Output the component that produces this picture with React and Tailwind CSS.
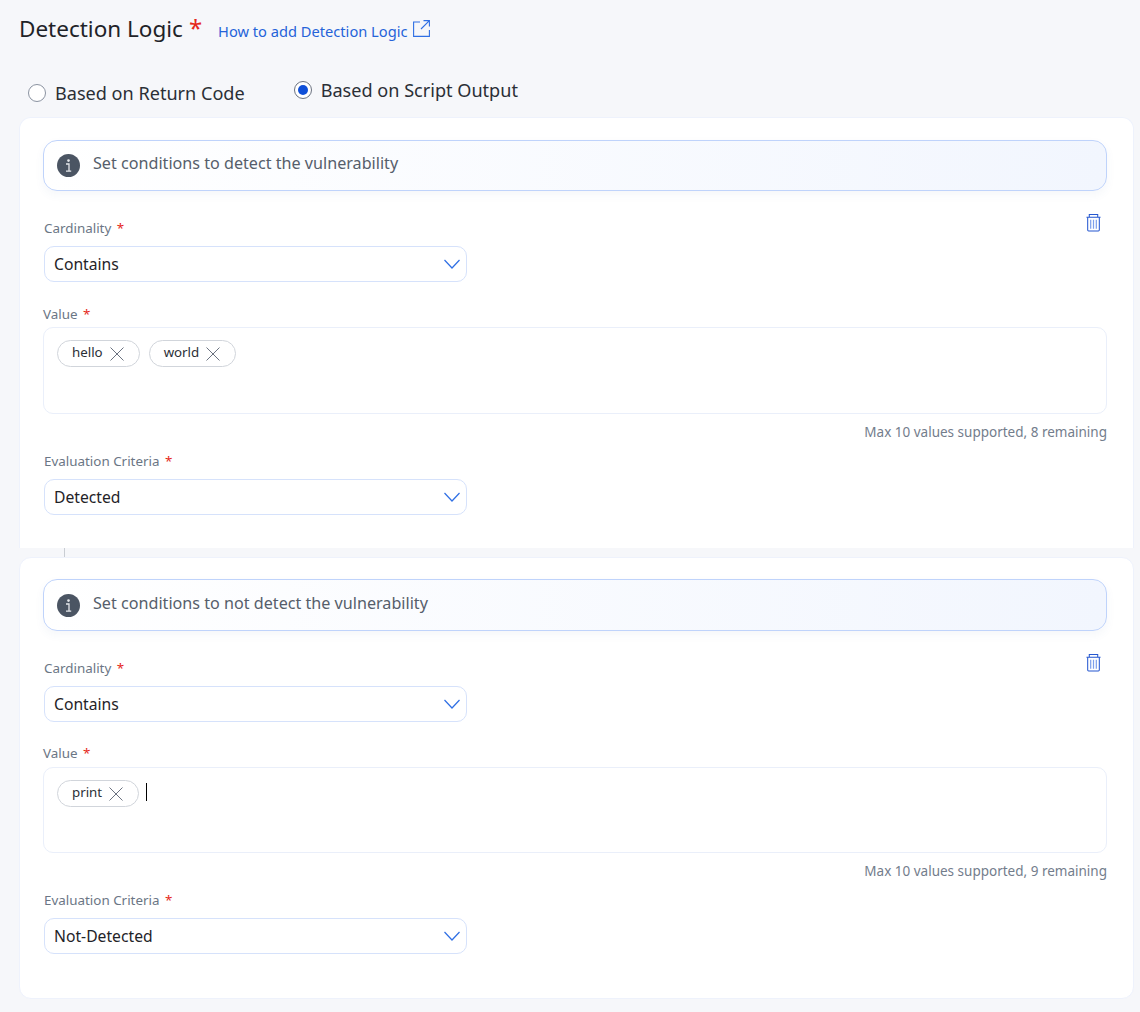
import React from 'react';

const Star = ({ className = '' }) => <span className={`text-[#e5281b] ${className}`}>*</span>;

const Chevron = () => (
  <svg width="18" height="10" viewBox="0 0 18 10" fill="none" className="shrink-0">
    <path d="M1.5 1 L9 9 L16.5 1" stroke="#2f6fe4" strokeWidth="1.2" />
  </svg>
);

const CloseX = () => (
  <svg width="16" height="16" viewBox="0 0 16 16" fill="none" className="shrink-0">
    <path d="M1.5 1.5 L14.5 14.5 M14.5 1.5 L1.5 14.5" stroke="#6b7280" strokeWidth="1" />
  </svg>
);

const Trash = () => (
  <svg width="15" height="19" viewBox="0 0 16 20" fill="none" preserveAspectRatio="none">
    <path d="M0.5 4.5 H15.5 M3.5 4.5 V1.5 H12.5 V4.5" stroke="#2557d0" strokeWidth="1.1" />
    <path d="M1.8 4.5 V18 Q1.8 19 2.8 19 H13.2 Q14.2 19 14.2 18 V4.5" stroke="#2557d0" strokeWidth="1.1" />
    <path d="M5 7 V16.5 M8 7 V16.5 M11 7 V16.5" stroke="#7ea0ec" strokeWidth="1.3" />
  </svg>
);

const Info = () => (
  <div className="w-[23px] h-[23px] rounded-full bg-[#4b5563] flex items-center justify-center shrink-0">
    <svg width="7" height="13" viewBox="0 0 7 13" fill="none">
      <circle cx="3.5" cy="1.6" r="1.3" fill="#e5e7eb" />
      <path d="M1 5 H4 V12 M1 12.2 H6.2" stroke="#e5e7eb" strokeWidth="1.3" />
    </svg>
  </div>
);

const ExternalLink = () => (
  <svg width="17" height="17" viewBox="0 0 17 17" fill="none">
    <path d="M7 2 H0.6 V16.4 H16.4 V10" stroke="#2f6fe4" strokeWidth="1.1" />
    <path d="M10.5 0.6 H16.4 V6.5 M16.4 0.6 L8 9" stroke="#2f6fe4" strokeWidth="1.1" />
  </svg>
);

const Select = ({ value }) => (
  <div className="w-[423px] h-9 ml-px bg-white border border-[#d6e2fb] rounded-[10px] flex items-center justify-between pl-[9px] pr-[5px] text-[15.7px] text-[#1f2328]">
    <span className="mt-px">{value}</span>
    <Chevron />
  </div>
);

const Label = ({ children, className = '' }) => (
  <div className={`text-[13.4px] leading-[18px] text-[#6b7685] ${className}`}>
    {children} <Star className="ml-[2px]" />
  </div>
);

const Chip = ({ text }) => (
  <div className="h-[27px] border border-[#d1d5db] rounded-full flex items-center gap-[6px] pl-[14px] pr-[14px] text-[13.3px] text-[#2b2f36]">
    <span className="-mt-[2px]">{text}</span>
    <CloseX />
  </div>
);

const Condition = ({ title, chips, remaining, criteria, cursor, className = '', infoClass, titleClass, valueLabelClass, valueHeight }) => (
  <section className={`bg-white border border-[#eef2fc] pl-[23px] pr-[26px] ${className}`}>
    <div className={`${infoClass} rounded-[14px] border border-[#bfd3fb] bg-gradient-to-r from-white to-[#f2f6fe] shadow-[0_4px_10px_rgba(60,90,160,0.05)] flex items-center gap-[13px] pl-[13px] text-[16.15px] text-[#565e6b]`}>
      <Info />
      <span className={titleClass}>{title}</span>
    </div>

    <div className="flex justify-between items-start pt-[22px]">
      <Label className="ml-px mt-[6px]">Cardinality</Label>
      <div className="mr-[6px]"><Trash /></div>
    </div>
    <div className="mt-[9px] mb-[23px]"><Select value="Contains" /></div>

    <Label className={valueLabelClass}>Value</Label>
    <div className={`${valueHeight} border border-[#eaeffa] rounded-[10px] flex items-start gap-[9px] pl-[13px] pt-[12px]`}>
      {chips.map((c) => <Chip key={c} text={c} />)}
      {cursor && <div className="w-px h-[18px] bg-black ml-[-2px] mt-[3px]" />}
    </div>
    <div className="text-right text-[13.5px] leading-[18px] text-[#737d8c] mt-[9px]">
      Max 10 values supported, {remaining} remaining
    </div>

    <Label className="ml-px mt-[11px] mb-[9px]">Evaluation Criteria</Label>
    <Select value={criteria} />
  </section>
);

export default function App() {
  return (
    <div className="min-h-[1012px] w-[1140px] bg-[#f6f7fa] font-['Noto_Sans',sans-serif] pl-[19px] pr-[6px] pt-[10px]">
      <div className="flex items-start h-[37px]">
        <h1 className="text-[22.5px] leading-9 mt-px text-[#1f2328]">Detection Logic</h1>
        <span className="text-[24px] leading-9 text-[#e5281b] ml-[6px]">*</span>
        <a className="text-[14.65px] leading-5 text-[#2563d9] ml-[16px] mt-[11px]">How to add Detection Logic</a>
        <span className="ml-[6px] mt-[10px]"><ExternalLink /></span>
      </div>

      <div className="flex items-start h-[70px] pl-[9px] pt-[23px] text-[18.1px] leading-[26px] text-[#2b2f36]">
        <div className="flex items-center gap-[9px] mt-[10px]">
          <div className="w-[18px] h-[18px] rounded-full border border-[#8b93a1] bg-white" />
          <span>Based on Return Code</span>
        </div>
        <div className="flex items-center gap-[9px] ml-[49px] mt-[7px]">
          <div className="w-[18px] h-[18px] rounded-full border border-[#6b7280] bg-white flex items-center justify-center">
            <div className="w-[10px] h-[10px] rounded-full bg-[#0f4fd8]" />
          </div>
          <span>Based on Script Output</span>
        </div>
      </div>

      <Condition
        title="Set conditions to detect the vulnerability"
        chips={['hello', 'world']}
        remaining={8}
        criteria="Detected"
        className="rounded-t-[12px] border-b-0 h-[431px] pt-[22px]"
        infoClass="h-[51px]"
        titleClass="-mt-[5px]"
        valueLabelClass="mb-[4px]"
        valueHeight="h-[87px]"
      />

      <div className="h-[9px] pl-[45px]">
        <div className="w-px h-full bg-[#c9cdd3]" />
      </div>

      <Condition
        title="Set conditions to not detect the vulnerability"
        chips={['print']}
        remaining={9}
        criteria="Not-Detected"
        cursor
        className="rounded-[12px] h-[442px] pt-[21px]"
        infoClass="h-[52px]"
        titleClass="-mt-[4px]"
        valueLabelClass="-mt-px mb-[5px]"
        valueHeight="h-[86px]"
      />
    </div>
  );
}
